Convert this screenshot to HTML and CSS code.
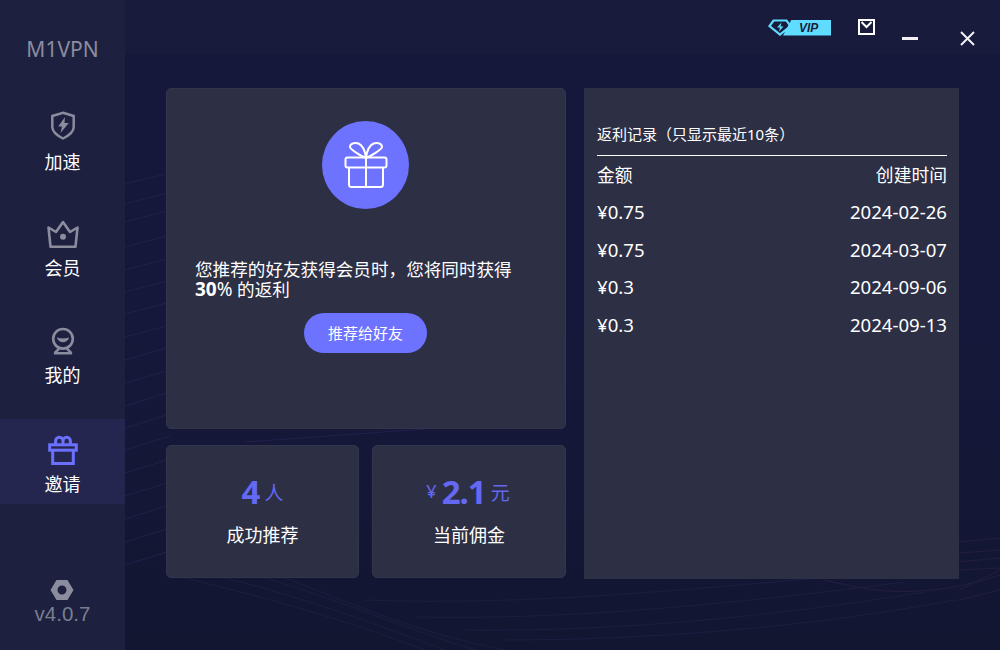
FILE: index.html
```html
<!DOCTYPE html>
<html lang="zh-CN">
<head>
	<meta charset="UTF-8">
	<title>M1VPN</title>
	<link rel="stylesheet" href="styles.css">
</head>
<body>
	<div class="app">
		<div class="side">
			<div class="logo">M1VPN</div>
			<div class="nav">
				<a class="nav-item">
					<svg class="nav-icon" width="36" height="32" viewBox="0 0 36 32" fill="none" stroke="#8b8c9e" stroke-width="2.500"><path d="M18 1.800 28.700 5V16C28.700 21 23 25 18 27.500 13 25 7.300 21 7.300 16V5Z"/><path d="M20 6 13.200 15.500H17L15.500 22 23.800 12H19.500Z" fill="#8b8c9e" stroke="none"/></svg>
					<span>加速</span>
				</a>
				<a class="nav-item">
					<svg class="nav-icon" width="36" height="30" viewBox="0 0 36 30" fill="none" stroke="#8b8c9e" stroke-width="2.600" stroke-linejoin="round"><path d="M3.500 9.500 11 14 18 4 25 14 32.500 9.500 30.500 28.700H5.500Z"/><circle cx="18" cy="18.700" r="3" fill="#8b8c9e" stroke="none"/></svg>
					<span>会员</span>
				</a>
				<a class="nav-item">
					<svg class="nav-icon" width="36" height="30" viewBox="0 0 36 30" fill="none" stroke="#8b8c9e" stroke-width="2.600" stroke-linejoin="round"><circle cx="18" cy="12.800" r="9.800"/><path d="M14 22C14 24.500 10 25 10 27.300H26C26 25 22 24.500 22 22"/><path d="M11.800 11.200C13.500 17.800 22.500 17.800 24.200 11.200 21 12.800 15 12.800 11.800 11.200Z" fill="#8b8c9e" stroke="none"/></svg>
					<span>我的</span>
				</a>
				<a class="nav-item active">
					<svg class="nav-icon" width="36" height="31" viewBox="0 0 36 31" fill="none" stroke="#6c70ff" stroke-width="3"><rect x="4.700" y="11.800" width="26.600" height="5.400"/><path d="M7.700 17.200V30.500H28.300V17.200"/><path d="M18 11.500V8A3.700 3.700 0 0 0 10.600 8V11.500M18 11.500V8A3.700 3.700 0 0 1 25.400 8V11.500"/></svg>
					<span>邀请</span>
				</a>
			</div>
			<div class="version">
				<svg class="version-icon" width="24" height="22" viewBox="0 0 24 22"><path d="M6.500 1H17.500L23.500 11 17.500 21H6.500L.5 11ZM12 6.500A4.500 4.500 0 1 0 12 15.500 4.500 4.500 0 0 0 12 6.500Z" fill="#8b8c9e" fill-rule="evenodd"/></svg>
				<span>v4.0.7</span>
			</div>
		</div>

		<div class="main">
			<!-- background wave lines -->
			<svg class="lines" width="875" height="650" viewBox="0 0 875 650" fill="none" stroke-width="1">
				<g stroke="#251f4c">
					<path d="M0 184 45 173"/>
					<path d="M0 204 45 192"/>
					<path d="M0 222 45 210"/>
					<path d="M0 247 45 235"/>
					<path d="M0 270 45 258"/>
					<path d="M0 292 45 280"/>
					<path d="M0 314 45 302"/>
					<path d="M0 337 45 325"/>
					<path d="M0 360 45 347"/>
					<path d="M0 383 45 370"/>
					<path d="M0 406 45 392"/>
					<path d="M0 428 45 414"/>
					<path d="M0 450 45 436"/>
					<path d="M0 473 45 459"/>
					<path d="M0 496 45 482"/>
					<path d="M0 519 45 505"/>
					<path d="M0 542 45 528"/>
					<path d="M0 565 45 551"/>
					<path d="M120 442 300 429"/>
				</g>
				<g stroke="#1b1e40">
					<path d="M60 578C150 600 220 620 300 650"/>
					<path d="M100 578C170 595 240 620 320 650"/>
					<path d="M140 578C200 595 270 625 350 650"/>
					<path d="M160 578C220 600 280 630 380 650"/>
					<path d="M240 600C400 606 560 590 760 572"/>
					<path d="M290 617C440 620 600 605 780 582"/>
					<path d="M340 630C480 632 640 618 800 592"/>
					<path d="M380 640C520 640 680 628 830 600"/>
				</g>
				<g stroke="#241e40">
					<path d="M834 542 875 538"/>
					<path d="M834 553 875 550"/>
					<path d="M834 562 875 558"/>
					<path d="M834 570 875 568"/>
					<path d="M834 590 875 570"/>
					<path d="M834 600 875 590"/>
					<path d="M700 580C760 596 810 596 875 575"/>
				</g>
			</svg>
			<div class="top">
				<div class="vip">
					<svg class="vip-gem" width="24" height="17" viewBox="0 0 24 17" fill="none" stroke="#5fdcff" stroke-width="2.200"><path d="M5.500 1.500H18.500L22.500 7 12 15.500 1.500 7Z"/><path d="M13.500 3.500 9 8.500H12L11 12.500 15.500 7.500H12.500Z" fill="#5fdcff" stroke="none"/></svg>
					<span class="vip-tag">VIP</span>
				</div>
				<svg class="mail" width="17" height="16" viewBox="0 0 17 16" fill="none" stroke="#fff" stroke-width="2"><rect x="1" y="1" width="15" height="14"/><path d="M3.500 3 8.500 8 13.500 3"/></svg>
				<span class="min"></span>
				<svg class="close" width="15" height="15" viewBox="0 0 15 15" stroke="#f1f1f5" stroke-width="2"><path d="M1 1 14 14M14 1 1 14"/></svg>
			</div>
			<div class="content">
				<div class="left">
					<div class="card invite">
						<div class="gift">
							<svg width="44" height="48" viewBox="0 0 44 48" fill="none" stroke="#fff" stroke-width="2"><rect x="1.500" y="16.500" width="41" height="10" rx="2"/><path d="M5 26.500V43.500Q5 46 7.500 46H36.500Q39 46 39 43.500V26.500M22 16.500V46"/><path d="M22 16.500C18 16 6 8 6 6 6 1.500 12 1.500 14.500 2.500 18 4 21 10 22 16.500ZM22 16.500C26 16 38 8 38 6 38 1.500 32 1.500 29.500 2.500 26 4 23 10 22 16.500Z"/></svg>
						</div>
						<p class="invite-text">您推荐的好友获得会员时，您将同时获得<br><span class="pct"><b>30</b>%</span> 的返利</p>
						<a class="btn">推荐给好友</a>
					</div>
					<div class="stats">
						<div class="card stat">
							<div class="stat-num"><b>4</b><span class="unit">人</span></div>
							<div class="stat-label">成功推荐</div>
						</div>
						<div class="card stat">
							<div class="stat-num"><span class="cur">¥</span><b>2.1</b><span class="unit">元</span></div>
							<div class="stat-label">当前佣金</div>
						</div>
					</div>
				</div>
				<div class="record">
					<div class="record-title">返利记录（只显示最近10条）</div>
					<table>
						<tr class="head"><td>金额</td><td>创建时间</td></tr>
						<tr><td>¥0.75</td><td>2024-02-26</td></tr>
						<tr><td>¥0.75</td><td>2024-03-07</td></tr>
						<tr><td>¥0.3</td><td>2024-09-06</td></tr>
						<tr><td>¥0.3</td><td>2024-09-13</td></tr>
					</table>
				</div>
			</div>
		</div>
	</div>
</body>
</html>
```

FILE: styles.css
```css
*{
	margin:0;
	padding:0;
	box-sizing:border-box;
}
body{
	width:1000px;
	height:650px;
	overflow:hidden;
	font-family:"Noto Sans","Noto Sans CJK SC",sans-serif;
	color:#fff;
	background:#15183a;
}
.app{
	display:flex;
	height:650px;
}
.side{
	width:125px;
	flex:none;
	background:#1e203f;
	display:flex;
	flex-direction:column;
	align-items:center;
}
.logo{
	margin-top:35px;
	height:28px;
	line-height:28px;
	font-size:21px;
	color:#8b8c9e;
}
.nav{
	margin-top:33.5px;
	width:100%;
	display:flex;
	flex-direction:column;
	gap:22.5px;
}
.nav-item{
	height:85px;
	padding-top:14px;
	display:flex;
	flex-direction:column;
	align-items:center;
	gap:7.5px;
	font-size:18px;
	line-height:24px;
}
.nav-item.active{
	background:#25264f;
}
.nav-icon{
	display:block;
	overflow:visible;
}
.version{
	margin-top:auto;
	margin-bottom:24px;
	display:flex;
	flex-direction:column;
	align-items:center;
	font-family:"Liberation Sans",sans-serif;
	font-size:20.5px;
	line-height:24px;
	color:#7b7d90;
}
.version-icon{
	display:block;
	margin-bottom:1px;
}
.main{
	flex:1;
	position:relative;
	background:linear-gradient(#15183a,#15183a 50%,#131631);
}
.lines{
	position:absolute;
	left:0;
	top:0;
}
.top{
	position:relative;
	height:54px;
	background:#181b3b;
	display:flex;
	align-items:flex-start;
	padding-left:643px;
}
.vip{
	margin-top:19px;
	display:flex;
	align-items:center;
}
.vip-gem{
	display:block;
}
.vip-tag{
	width:48px;
	height:16px;
	margin-left:-9px;
	padding-left:16px;
	background:#5fdcff;
	clip-path:polygon(8.5px 0,100% 0,100% 100%,0 100%);
	color:#1a1c3a;
	font-family:"Liberation Sans",sans-serif;
	font-size:12px;
	line-height:16px;
	font-weight:bold;
	font-style:italic;
}
.mail{
	margin:19px 0 0 27px;
}
.min{
	width:16px;
	height:3px;
	margin:37px 0 0 27px;
	background:#f1f1f5;
}
.close{
	margin:31px 0 0 42px;
}
.content{
	position:relative;
	display:flex;
	gap:18px;
	padding:34px 0 0 41px;
}
.left{
	width:400px;
	display:flex;
	flex-direction:column;
	gap:16px;
}
.card{
	background:#2d2f45;
	border-radius:5px;
	border:1px solid #33354c;
}
.invite{
	height:341px;
	padding:32px 29px 0 28px;
	display:flex;
	flex-direction:column;
}
.gift{
	width:87px;
	height:88px;
	margin:0 auto;
	border-radius:50%;
	background:#6d72ff;
	display:flex;
	align-items:center;
	justify-content:center;
}
.invite-text{
	margin-top:50px;
	font-size:17.6px;
	line-height:20px;
}
.pct{
	font-size:19px;
}
.btn{
	width:123px;
	height:40px;
	margin:14px auto 0;
	border-radius:20px;
	background:#6d72ff;
	font-size:15px;
	line-height:40px;
	text-align:center;
}
.stats{
	display:flex;
	gap:13px;
}
.stat{
	width:194px;
	height:133px;
	padding-top:24px;
	text-align:center;
}
.stat:first-child{
	width:193px;
}
.stat-num{
	height:44px;
	line-height:44px;
	color:#6468f2;
	font-size:19px;
}
.stat-num b{
	font-size:33px;
	letter-spacing:-1px;
	margin-right:5px;
}
.stat-num .unit{
	position:relative;
	top:-4px;
}
.stat-num .cur{
	position:relative;
	top:-6px;
	font-size:18px;
	margin-right:5px;
}
.cur ~ .unit{
	margin-right:2px;
}
.stat-label{
	margin-top:9px;
	font-size:18px;
	line-height:24px;
}
.record{
	width:375px;
	height:491px;
	background:#2d2f45;
	padding:34px 12px 0 13px;
}
.record-title{
	height:34px;
	border-bottom:1px solid #fff;
	font-size:15px;
	line-height:24px;
	white-space:nowrap;
}
table{
	width:100%;
	margin-top:1px;
	border-collapse:collapse;
	font-size:18.6px;
}
.head{
	font-size:17.8px;
}
.head td{
	height:36.5px;
}
td{
	height:37.5px;
	line-height:24px;
}
td:last-child{
	text-align:right;
}
```
